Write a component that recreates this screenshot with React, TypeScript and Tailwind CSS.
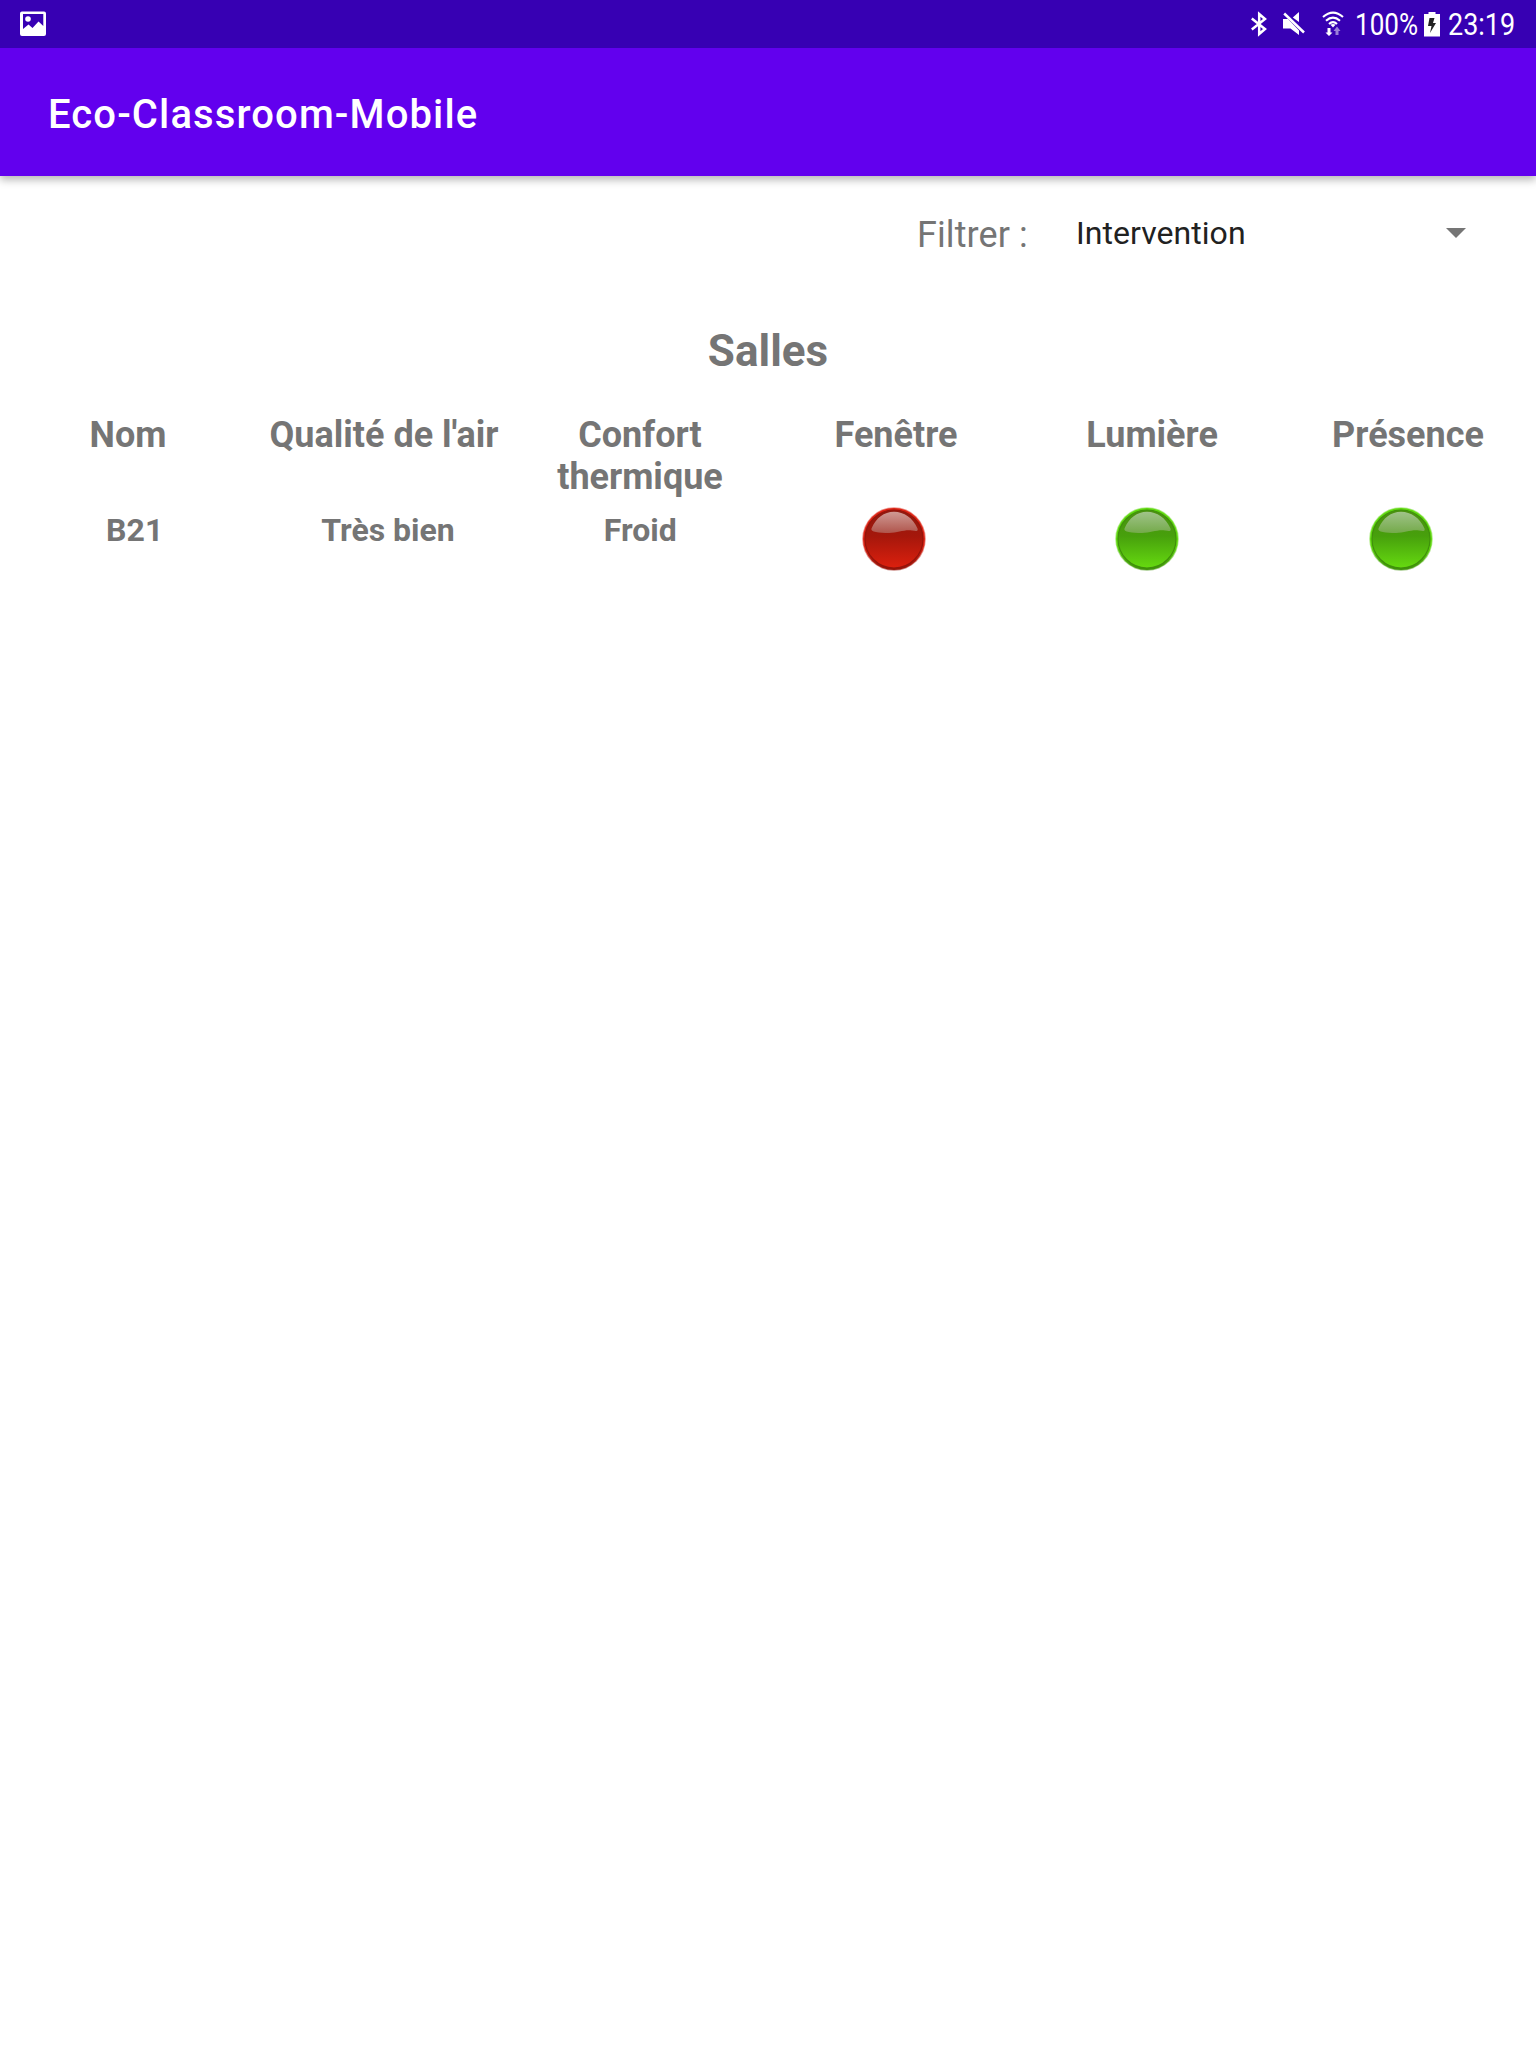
import React from "react";

const headers = ["Nom", "Qualité de l'air", "Confort thermique", "Fenêtre", "Lumière", "Présence"];

function Light({ color, id }: { color: "red" | "green"; id: string }) {
  const c =
    color === "red"
      ? { rim: "#dc2314", dark: "#94140a", top: "#8f1a10", mid: "#a5170b", bottom: "#dc200e", g1: "#cf9a94", g2: "#b0554c" }
      : { rim: "#5fd80e", dark: "#3f900b", top: "#4a8f10", mid: "#47a00c", bottom: "#66da10", g1: "#a0c389", g2: "#74aa4a" };
  return (
    <svg width="64" height="64" viewBox="0 0 64 64" className="block">
      <defs>
        <linearGradient id={`${id}-body`} x1="0" y1="0" x2="0" y2="1">
          <stop offset="0" stopColor={c.top} />
          <stop offset="0.45" stopColor={c.mid} />
          <stop offset="1" stopColor={c.bottom} />
        </linearGradient>
        <linearGradient id={`${id}-gloss`} x1="0" y1="0" x2="0" y2="1">
          <stop offset="0" stopColor={c.g1} />
          <stop offset="1" stopColor={c.g2} />
        </linearGradient>
        <linearGradient id={`${id}-rim`} x1="0" y1="0" x2="0" y2="1">
          <stop offset="0" stopColor={c.rim} />
          <stop offset="0.6" stopColor={c.rim} />
          <stop offset="1" stopColor={c.dark} />
        </linearGradient>
      </defs>
      <circle cx="32" cy="32" r="31.8" fill={`url(#${id}-rim)`} opacity="0.5" />
      <circle cx="32" cy="32" r="31" fill={`url(#${id}-rim)`} />
      <circle cx="32" cy="32" r="29" fill={`url(#${id}-body)`} stroke={c.dark} strokeWidth="1.2" />
      <path d="M9.500 21.500C14 11 22 4.800 32 4.800C42 4.800 51 11 55.500 21.500C56.500 24.500 54 24.300 50 23.500C42 22.500 36 26 27 26C17 26 8 25 9.500 21.500Z" fill={`url(#${id}-gloss)`} />
    </svg>
  );
}

function StatusBar() {
  return (
    <div className="relative z-10 flex h-12 items-center bg-[#3700b3] pl-5 text-white">
      <svg width="26" height="26" viewBox="0 0 26 26">
        <path fillRule="evenodd" fill="#fff" d="M2 0.500H24Q26 0.500 26 2.500V23Q26 25 24 25H2Q0 25 0 23V2.500Q0 0.500 2 0.500ZM3 3V18L8.500 13.500L12.500 17L18.500 10.500L23.300 15V3Z" />
        <circle cx="8" cy="8" r="2.800" fill="#fff" />
      </svg>
      <div className="ml-auto flex h-12 items-center pr-[21px]">
        <svg width="17" height="26" viewBox="0 0 17 26" fill="none" stroke="#fff" strokeWidth="2.500" strokeLinejoin="miter">
          <path d="M0.800 7.500L14 18L8.200 23V3L14 8L0.800 18.500" />
        </svg>
        <svg width="22" height="26" viewBox="0 0 22 26" className="ml-[15px]">
          <path d="M0 8H5L16 19.500V24L7.500 17.500H0ZM16 1V11L9.800 6.500Z" fill="#fff" />
          <path d="M1.200 2.500L21 21.500" stroke="#fff" strokeWidth="2.500" />
        </svg>
        <svg width="22" height="26" viewBox="0 0 22 26" className="ml-[17px]">
          <g fill="none" stroke="#fff" strokeWidth="2.100">
            <path d="M1 6Q11 -2.800 21 6" />
            <path d="M4 9.800Q11 3.500 18 9.800" />
            <path d="M7 13Q11 9.300 15 13" />
          </g>
          <path d="M8.500 13.800Q11 12 13.500 13.800L11 16.500Z" fill="#fff" />
          <path d="M5.500 17H8.500V21.500H10.500L7 25L3.500 21.500H5.500Z" fill="#fff" />
          <path d="M13.500 24V20H11.500L15 15.500L18.500 20H16.500V24Z" fill="#9b7fd9" />
        </svg>
        <div className="ml-[11px] w-[64px] overflow-visible">
          <span className="block w-max origin-left scale-x-[0.84] pt-px text-[31px] leading-[48px]">100%</span>
        </div>
        <svg width="16" height="26" viewBox="0 0 16 26" className="ml-[5px]">
          <path d="M4.500 1H11.500V3H16V25.500H0V3H4.500Z" fill="#fff" />
          <path d="M5.500 7H10.500L9 12H12L6 22L7.500 15H4Z" fill="#222" />
        </svg>
        <div className="ml-[8px] w-[67px] overflow-visible">
          <span className="block w-max origin-left scale-x-[0.87] pt-px text-[31px] leading-[48px]">23:19</span>
        </div>
      </div>
    </div>
  );
}

export default function App() {
  return (
    <div className="flex min-h-[2048px] w-[1536px] flex-col bg-white font-['Roboto',sans-serif] text-[#757575]">
      <StatusBar />
      <header className="flex h-32 items-center bg-[#6200ee] pl-12 shadow-[0_4px_8px_rgba(0,0,0,0.28)]">
        <h1 className="pt-[6px] text-[40px] leading-[48px] font-medium tracking-[1.12px] text-white">Eco-Classroom-Mobile</h1>
      </header>

      <div className="flex h-[114px] items-center">
        <span className="ml-[917px] pt-[4px] text-[36px] leading-[42px] tracking-[0.1px]">Filtrer :</span>
        <div className="ml-auto flex w-[390px] items-center">
          <span className="text-[32px] leading-[38px] tracking-[0.05px] text-[#212121]">Intervention</span>
        </div>
        <svg width="20" height="10" viewBox="0 0 20 10" className="mr-[70px] -ml-[20px]">
          <path d="M0 0H20L10 10Z" fill="#757575" />
        </svg>
      </div>

      <h2 className="mt-[35px] text-center text-[44px] leading-[52px] font-bold">Salles</h2>

      <div className="mt-[37px] grid grid-cols-6 text-center text-[36px] leading-[42px] font-bold">
        {headers.map((h) => (
          <div key={h} className="px-2">{h}</div>
        ))}
      </div>
      <div className="mt-[13px] grid grid-cols-6 px-[8px] text-center text-[32px] leading-[38px] font-bold">
        <div>B21</div>
        <div>Très bien</div>
        <div className="pr-[2px]">Froid</div>
        <div className="-mt-1 flex justify-center pr-[2px]"><Light color="red" id="window" /></div>
        <div className="-mt-1 flex justify-center pr-[2px]"><Light color="green" id="lamp" /></div>
        <div className="-mt-1 flex justify-center pr-px"><Light color="green" id="presence" /></div>
      </div>
    </div>
  );
}
